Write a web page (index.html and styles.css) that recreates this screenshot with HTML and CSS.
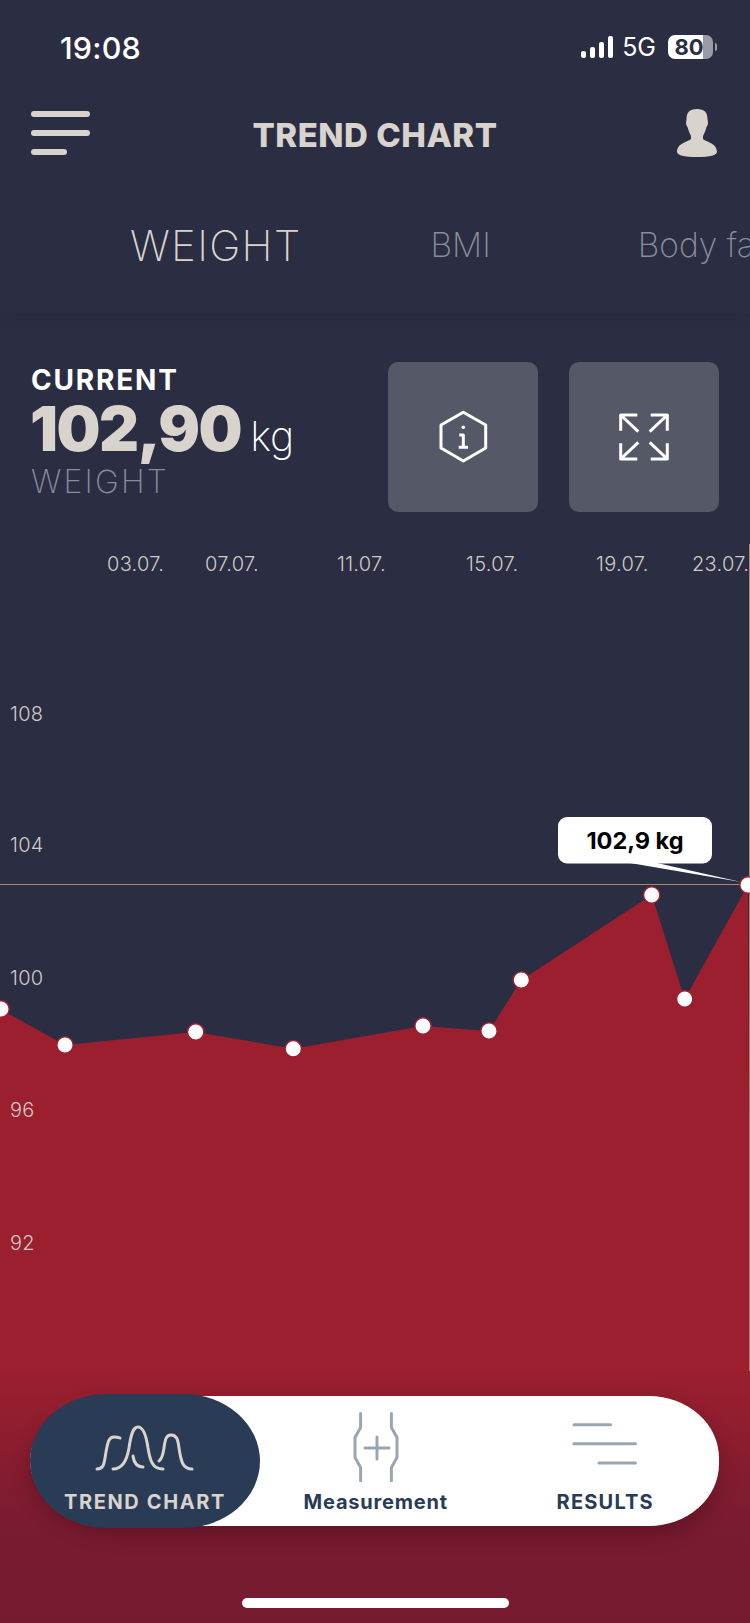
FILE: index.html
```html
<!DOCTYPE html>
<html>
<head>
  <title>Trend Chart</title>
  <meta charset="UTF-8">
  <meta name="viewport" content="width=device-width, initial-scale=1.0">
  <link rel="stylesheet" href="styles.css">
</head>
<body>
  <div class="screen">
    <header class="header">
      <div class="status">
        <span class="time">19:08</span>
        <div class="status-right">
          <svg class="signal" width="33" height="22" viewBox="0 0 33 22">
            <rect x="0" y="15" width="5" height="7" rx="2"/>
            <rect x="9" y="11" width="5" height="11" rx="2"/>
            <rect x="18" y="6" width="5" height="16" rx="2"/>
            <rect x="27" y="0" width="5" height="22" rx="2"/>
          </svg>
          <span class="network">5G</span>
          <span class="battery">80</span>
          <span class="battery-nub"></span>
        </div>
      </div>

      <div class="nav">
        <div class="menu">
          <span class="menu-line"></span>
          <span class="menu-line"></span>
          <span class="menu-line short"></span>
        </div>
        <h1 class="title">TREND CHART</h1>
        <svg class="user" width="42" height="48" viewBox="0 0 42 48">
          <path d="M21 0C13.5 0 10.5 3.5 10.5 10L10 14C10 16 11 17 11.5 18C12.5 22 14 25 15 27V30C12 33 1 34 1 43C1 46 8 48 21 48C34 48 41 46 41 43C41 34 30 33 27 30V27C28 25 29.5 22 30.5 18C31 17 32 16 32 14L31.5 10C31.5 3.5 28.5 0 21 0Z"/>
        </svg>
      </div>

      <div class="tabs">
        <span class="tab active">WEIGHT</span>
        <span class="tab">BMI</span>
        <span class="tab">Body fat</span>
      </div>
    </header>

    <section class="summary">
      <div class="current">
        <div class="current-label">CURRENT</div>
        <div class="current-value"><span class="number">102,90</span><span class="unit">kg</span></div>
        <div class="current-name">WEIGHT</div>
      </div>
      <div class="actions">
        <div class="action">
          <svg class="action-icon" width="50" height="54" viewBox="0 0 50 54">
            <path d="M25.3 2.3L47.7 15V38L25.3 51L3 38V15Z"/>
            <path d="M21.3 25H25.3V37.3M20.7 37.3H30"/>
            <circle class="dot" cx="25.3" cy="17.3" r="1.8"/>
          </svg>
        </div>
        <div class="action">
          <svg class="action-icon" width="52" height="50" viewBox="0 0 52 50">
            <path d="M19.3 3H2.7V18.7M2.7 3L20.3 19.7"/>
            <path d="M32.7 3H49.3V18.7M49.3 3L31.7 19.7"/>
            <path d="M19.3 47H2.7V31.3M2.7 47L20.3 30.3"/>
            <path d="M32.7 47H49.3V31.3M49.3 47L31.7 30.3"/>
          </svg>
        </div>
      </div>
    </section>

    <!-- chart uses page coordinates through the viewBox -->
    <svg class="chart" width="750" height="831" viewBox="0 540 750 831">
      <polygon class="area" points="0,1009 65,1045 195.7,1032 293.3,1048.7 423,1026 489,1031 521.3,980 651.7,895 684.7,999 748,885 750,1371 0,1371"/>

      <text class="tick" x="107" y="571">03.07.</text>
      <text class="tick" x="205" y="571">07.07.</text>
      <text class="tick" x="337" y="571">11.07.</text>
      <text class="tick" x="466" y="571">15.07.</text>
      <text class="tick" x="596" y="571">19.07.</text>
      <text class="tick" x="692" y="571">23.07.</text>

      <text class="tick" x="10" y="721">108</text>
      <text class="tick" x="10" y="852">104</text>
      <text class="tick" x="10" y="985">100</text>
      <text class="tick" x="10" y="1117">96</text>
      <text class="tick" x="10" y="1250">92</text>

      <line class="guide" x1="0" y1="884.5" x2="750" y2="884.5"/>
      <line class="guide" x1="749.5" y1="544" x2="749.5" y2="1371"/>

      <circle class="point" cx="1" cy="1009" r="8.2"/>
      <circle class="point" cx="65" cy="1045" r="8.2"/>
      <circle class="point" cx="195.7" cy="1032" r="8.2"/>
      <circle class="point" cx="293.3" cy="1048.7" r="8.2"/>
      <circle class="point" cx="423" cy="1026" r="8.2"/>
      <circle class="point" cx="489" cy="1031" r="8.2"/>
      <circle class="point" cx="521.3" cy="980" r="8.2"/>
      <circle class="point" cx="651.7" cy="895" r="8.2"/>
      <circle class="point" cx="684.7" cy="999" r="8.2"/>
      <circle class="point" cx="748" cy="885" r="8.2"/>

      <rect class="bubble" x="558" y="817" width="154" height="46.5" rx="9"/>
      <polygon class="bubble" points="630,863 657,863 741,882"/>
      <text class="bubble-text" x="635" y="849">102,9 kg</text>
    </svg>

    <div class="bottom">
      <nav class="tabbar">
        <div class="tabbar-item current-item">
          <svg class="tabbar-icon" width="110" height="58" viewBox="0 0 110 58">
            <path d="M7 45C14 45 14 40 16 28C18 17 19 13 24 13C26 13 28 13 30 14"/>
            <path d="M23 45C33 45 37 36 39 24C41 10 43 3 48 3C53 3 56 10 58 24C60 36 62 45 73 45"/>
            <path d="M43 32C44 39 47 43 53 43"/>
            <path d="M69 37C72 35 73 31 74 24C75 16 76 11 81 11C87 11 88 16 89 24C91 38 93 45 102 45"/>
          </svg>
          <span class="tabbar-label">TREND CHART</span>
        </div>
        <div class="tabbar-item">
          <svg class="tabbar-icon" width="50" height="70" viewBox="0 0 50 70">
            <path d="M9.6 1.5V15.5L4 25.5V45.5L9.6 55.5V69"/>
            <path d="M40.4 1.5V15.5L46 25.5V45.5L40.4 55.5V69"/>
            <path d="M14 36H38M26 25V47"/>
          </svg>
          <span class="tabbar-label">Measurement</span>
        </div>
        <div class="tabbar-item results-item">
          <svg class="tabbar-icon" width="66" height="44" viewBox="0 0 66 44">
            <path d="M2 2.7H38.5M2 21.7H63.5M27 41H63.5"/>
          </svg>
          <span class="tabbar-label">RESULTS</span>
        </div>
      </nav>
      <div class="home-indicator"></div>
    </div>
  </div>
</body>
</html>
```

FILE: styles.css
```css
body {
  margin: 0;
  background-color: #2b2d42;
  font-family: Inter, "Liberation Sans", sans-serif;
}
.screen {
  display: flex;
  flex-direction: column;
  width: 750px;
  height: 1623px;
  overflow: hidden;
}

/* header */
.header {
  height: 313px;
  box-shadow: 0 3px 14px rgba(0, 0, 0, 0.08);
}
.status {
  display: flex;
  justify-content: space-between;
  align-items: center;
  height: 24px;
  padding: 35px 33px 0 60px;
  color: white;
}
.time {
  font-size: 30.5px;
  font-weight: 500;
  letter-spacing: 0.2px;
}
.status-right {
  display: flex;
  align-items: center;
}
.signal {
  margin-right: 8px;
  fill: white;
}
.network {
  margin-right: 12px;
  font-size: 25px;
}
.battery {
  width: 45px;
  height: 24px;
  border-radius: 7px;
  background: linear-gradient(to right, white 78%, #9a9ba6 78%);
  color: #2b2d42;
  font-size: 22px;
  font-weight: 700;
  line-height: 24px;
  text-align: center;
  text-indent: -3px;
}
.battery-nub {
  width: 2px;
  height: 8px;
  margin-left: 2px;
  border-radius: 0 2px 2px 0;
  background-color: #9a9ba6;
}
.nav {
  display: flex;
  justify-content: space-between;
  align-items: center;
  height: 48px;
  margin-top: 50px;
  padding: 0 32px 0 31px;
}
.menu {
  display: flex;
  flex-direction: column;
  gap: 13px;
  width: 59px;
}
.menu-line {
  height: 6px;
  border-radius: 3px;
  background-color: #d9d3ce;
}
.menu-line.short {
  width: 36px;
}
.title {
  margin: 3px 16px 0 0;
  color: #d9d3ce;
  font-size: 33px;
  font-weight: 800;
  letter-spacing: 0.5px;
  line-height: 44px;
}
.user {
  fill: #d9d3ce;
}
.tabs {
  display: flex;
  align-items: center;
  height: 50px;
  margin-top: 63px;
  padding-left: 130px;
  overflow: hidden;
  white-space: nowrap;
}
.tab {
  margin-right: 147px;
  color: #8a8c9a;
  font-size: 33.5px;
  font-weight: 200;
}
.tab.active {
  margin-right: 129px;
  color: #d9d3ce;
  font-size: 42px;
  letter-spacing: 1.3px;
}

/* current value and buttons */
.summary {
  display: flex;
  justify-content: space-between;
  height: 150px;
  padding: 49px 31px 28px 31px;
}
.current {
  margin-top: 1px;
}
.current-label {
  color: white;
  font-size: 28px;
  font-weight: 700;
  letter-spacing: 1.8px;
  line-height: 34px;
}
.current-value {
  display: flex;
  align-items: baseline;
  height: 60px;
  margin: 3px 0 0 -1px;
  line-height: 58px;
}
.number {
  color: #d9d3ce;
  font-size: 62px;
  font-weight: 900;
  letter-spacing: -1.5px;
}
.unit {
  margin-left: 9px;
  color: white;
  font-size: 41px;
  font-weight: 200;
}
.current-name {
  color: #8a8c9a;
  font-size: 32px;
  font-weight: 200;
  letter-spacing: 2.2px;
  line-height: 44px;
}
.actions {
  display: flex;
  gap: 31px;
}
.action {
  display: flex;
  justify-content: center;
  align-items: center;
  width: 150px;
  height: 150px;
  border-radius: 10px;
  background-color: #555866;
}
.action-icon {
  fill: none;
  stroke: white;
  stroke-width: 3;
  stroke-linejoin: round;
}
.action-icon .dot {
  fill: white;
  stroke: none;
}

/* chart */
.chart {
  display: block;
  flex: none;
}
.tick {
  fill: #cfcac5;
  font-size: 20px;
  font-weight: 300;
  letter-spacing: 0.3px;
}
.area {
  fill: #9b1f2e;
}
.guide {
  stroke: #a58a6a;
  stroke-width: 1;
}
.point {
  fill: white;
  stroke: #a01f30;
  stroke-width: 1.5;
}
.bubble {
  fill: white;
}
.bubble-text {
  fill: black;
  font-size: 23.5px;
  font-weight: 700;
  text-anchor: middle;
}

/* bottom bar */
.bottom {
  flex: 1;
  padding-top: 25px;
  background: linear-gradient(to bottom, #9b1f2e 0%, #7a1b30 60%, #751b30 100%);
}
.tabbar {
  display: flex;
  width: 689px;
  height: 130px;
  margin-left: 30px;
  border-radius: 95px 70px 70px 95px / 65px 62px 62px 65px;
  background-color: white;
  box-shadow: 0 8px 20px rgba(40, 0, 10, 0.3);
}
.tabbar-item {
  display: flex;
  flex: 1;
  flex-direction: column;
  justify-content: flex-end;
  align-items: center;
  padding: 0 0 12px 2px;
}
.tabbar-item.current-item {
  flex: none;
  width: 230px;
  height: 134px;
  margin-top: -2px;
  padding: 0 0 14px 0;
  box-sizing: border-box;
  border-radius: 78px / 68px;
  background-color: #2a3b56;
}
.tabbar-icon {
  margin-bottom: 8px;
  fill: none;
  stroke: #9aa5b3;
  stroke-width: 3;
  stroke-linecap: round;
  stroke-linejoin: round;
}
.results-item .tabbar-icon {
  margin-bottom: 24px;
}
.current-item .tabbar-icon {
  stroke: #d9d3ce;
}
.tabbar-label {
  color: #2a3b56;
  font-size: 20px;
  font-weight: 700;
  letter-spacing: 0.8px;
}
.current-item .tabbar-label {
  color: #d9d3ce;
  letter-spacing: 1.6px;
}
.results-item .tabbar-label {
  letter-spacing: 1.2px;
}
.home-indicator {
  width: 267px;
  height: 10px;
  margin: 72px 0 0 242px;
  border-radius: 5px;
  background-color: white;
}
```
